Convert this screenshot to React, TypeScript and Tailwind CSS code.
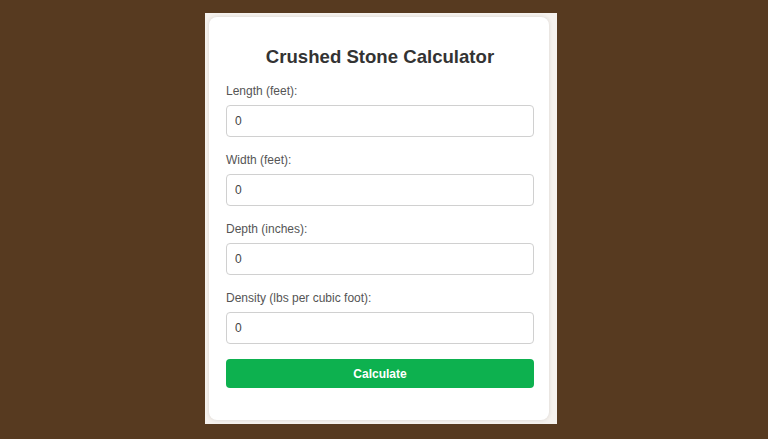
import React from 'react'

const fields = [
  'Length (feet):',
  'Width (feet):',
  'Depth (inches):',
  'Density (lbs per cubic foot):',
]

export default function App() {
  return (
    <div className="min-h-screen w-full bg-[#573a20] flex justify-center pt-[13px] font-['Liberation_Sans',Arial,sans-serif]">
      {/* frame */}
      <div className="w-[352px] h-[411px] mr-[6px] bg-[#f6f2ee] pt-[4px] pl-[4px] pr-[8px]">
        <div className="bg-white rounded-lg shadow-[0_0_4px_rgba(0,0,0,0.12)] h-[403px] pl-[17px] pr-[15px] pt-[28px]">
          <h1 className="text-center text-[18.6px] leading-[24px] font-bold text-[#333]">
            Crushed Stone Calculator
          </h1>

          <div className="mt-[14px]">
            {fields.map((f) => (
              <div key={f} className="mb-[15px]">
                <label className="block text-[12px] leading-[16px] text-[#555] mb-[6px]">{f}</label>
                <input
                  type="text"
                  defaultValue="0"
                  className="block w-full h-[32px] px-[8px] rounded-[4px] border border-[#d0d0d0] text-[12px] text-[#444] outline-none"
                />
              </div>
            ))}
            <button className="w-full h-[29px] rounded-[4px] bg-[#0db14f] text-white text-[12px] font-bold">
              Calculate
            </button>
          </div>
        </div>
      </div>
    </div>
  )
}
